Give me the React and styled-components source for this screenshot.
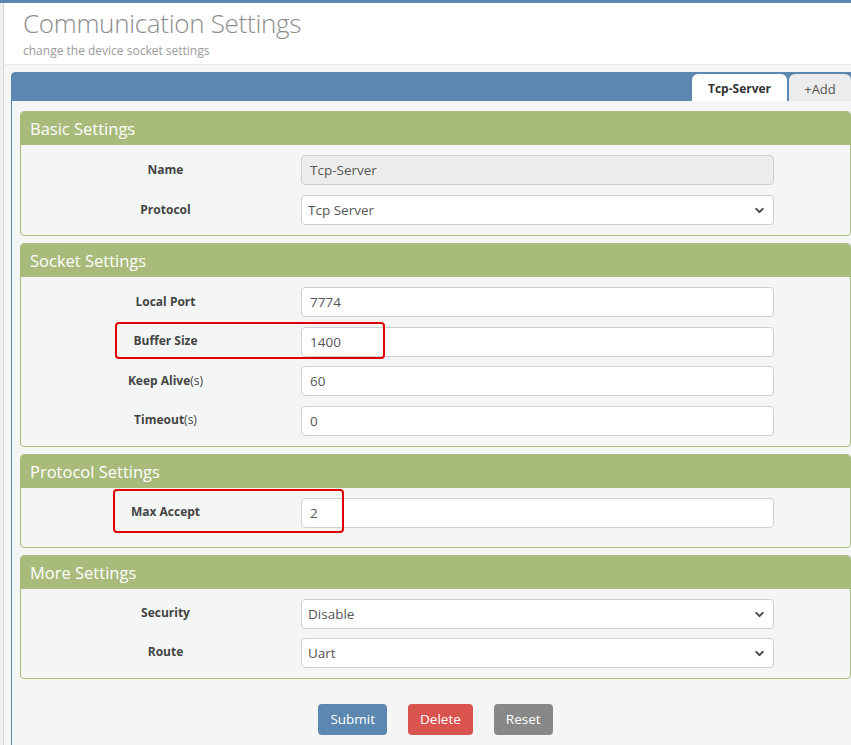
import React from "react"
import styled, { createGlobalStyle } from "styled-components"
import { ChevronDown } from "lucide-react"

const GlobalStyle = createGlobalStyle`
  html, body {
    margin: 0;
    padding: 0;
    background: #f4f6f5;
    font-family: "Open Sans", "Liberation Sans", sans-serif;
    overflow: hidden;
  }
`

const Page = styled.div`
  display: flex;
  min-height: 745px;
  border-top: 3px solid #5b87b0;
  box-sizing: border-box;
  overflow: hidden;
`
const Rail = styled.div`
  width: 3px;
  flex: none;
  background: #f0f0f0;
  border-right: 1px solid #d6d6d6;
`
const Main = styled.div`
  flex: 1;
  min-width: 0;
`
const Header = styled.div`
  background: #fff;
  height: 62px;
  box-sizing: border-box;
  padding: 2px 0 0 19px;
  border-bottom: 1px solid #e8e8e8;
`
const Title = styled.h1`
  margin: 0;
  font-size: 26px;
  font-weight: 300;
  color: #8d8d8d;
  line-height: 36px;
  letter-spacing: -0.3px;
`
const Subtitle = styled.div`
  font-size: 12px;
  color: #9a9a9a;
  margin-top: 1px;
`
const Panel = styled.div`
  margin: 7px -9px 0 7px;
  border: 1px solid #5b87b0;
  border-radius: 4px 4px 0 0;
  min-height: 700px;
`
const TabBar = styled.div`
  background: #5b87b0;
  height: 28px;
  display: flex;
  justify-content: flex-end;
  align-items: flex-end;
  gap: 2px;
  padding-right: 8px;
`
const Tab = styled.div`
  height: 27px;
  box-sizing: border-box;
  display: flex;
  align-items: center;
  justify-content: center;
  width: ${(p) => p.$width}px;
  border-radius: 6px 6px 0 0;
  background: ${(p) => (p.$active ? "#fff" : "#ececec")};
  color: ${(p) => (p.$active ? "#333" : "#555")};
  font-size: ${(p) => (p.$active ? 12 : 13)}px;
  font-weight: ${(p) => (p.$active ? 700 : 400)};
  padding-top: 2px;
`
const Body = styled.div`
  padding: 10px 8px 0 8px;
  display: flex;
  flex-direction: column;
  gap: 7px;
`
const Section = styled.div`
  border: 1px solid #a8bb7b;
  border-radius: 4px;
  background: #f4f6f5;
  overflow: hidden;
`
const SectionHead = styled.div`
  background: #a8bb7b;
  color: #fff;
  font-size: 16.5px;
  height: 33px;
  line-height: 33px;
  padding-left: 9px;
`
const SectionBody = styled.div`
  padding: 10px 0 ${(p) => p.$bottom || 10}px 9px;
  display: flex;
  flex-direction: column;
  gap: ${(p) => p.$gap || 10}px;
`
const Row = styled.div`
  position: relative;
  display: grid;
  grid-template-columns: 271px 473px;
  align-items: center;
`
const Label = styled.label`
  text-align: center;
  font-size: 12px;
  font-weight: 700;
  color: #444;
  padding-bottom: 2px;
  span {
    font-weight: 400;
  }
`
const fieldCss = `
  height: 30px;
  box-sizing: border-box;
  width: 100%;
  border: 1px solid #cfcfcf;
  border-radius: 4px;
  padding: 0 8px;
  font-family: inherit;
  font-size: 13.5px;
  color: #555;
  outline: none;
`
const Input = styled.input`
  ${fieldCss}
  background: ${(p) => (p.disabled ? "#ededed" : "#fff")};
`
const SelectWrap = styled.div`
  position: relative;
  svg {
    position: absolute;
    right: 8px;
    top: 9px;
    color: #444;
    pointer-events: none;
  }
`
const Select = styled.select`
  ${fieldCss}
  appearance: none;
  background: #fff;
  padding-left: 6px;
`
const Highlight = styled.div`
  position: absolute;
  left: ${(p) => p.$left}px;
  top: ${(p) => p.$top}px;
  width: ${(p) => p.$width}px;
  height: ${(p) => p.$height}px;
  border: 2px solid #e00000;
  border-radius: 4px;
  box-sizing: border-box;
  pointer-events: none;
`
const Actions = styled.div`
  display: flex;
  justify-content: center;
  gap: 21px;
  margin-top: 25px;
`
const Button = styled.button`
  height: 31px;
  border: none;
  border-radius: 4px;
  padding: 0 12px;
  font-family: inherit;
  font-size: 13.5px;
  color: #fff;
  background: ${(p) => p.$color};
`

function Field({ label, unit, value, disabled, select, highlight }) {
  return (
    <Row>
      <Label>
        {label}
        {unit && <span>({unit})</span>}
      </Label>
      {select ? (
        <SelectWrap>
          <Select defaultValue={value}>
            <option>{value}</option>
          </Select>
          <ChevronDown size={13} strokeWidth={3.5} />
        </SelectWrap>
      ) : (
        <Input defaultValue={value} disabled={disabled} />
      )}
      {highlight && <Highlight {...highlight} />}
    </Row>
  )
}

export default function App() {
  return (
    <>
      <GlobalStyle />
      <Page>
        <Rail />
        <Main>
          <Header>
            <Title>Communication Settings</Title>
            <Subtitle>change the device socket settings</Subtitle>
          </Header>
          <Panel>
            <TabBar>
              <Tab $active $width={95}>Tcp-Server</Tab>
              <Tab $width={62}>+Add</Tab>
            </TabBar>
            <Body>
              <Section>
                <SectionHead>Basic Settings</SectionHead>
                <SectionBody>
                  <Field label="Name" value="Tcp-Server" disabled />
                  <Field label="Protocol" value="Tcp Server" select />
                </SectionBody>
              </Section>
              <Section>
                <SectionHead>Socket Settings</SectionHead>
                <SectionBody $gap={9.5}>
                  <Field label="Local Port" value="7774" />
                  <Field
                    label="Buffer Size"
                    value="1400"
                    highlight={{ $left: 85, $top: -5, $width: 270, $height: 37 }}
                  />
                  <Field label="Keep Alive" unit="s" value="60" />
                  <Field label="Timeout" unit="s" value="0" />
                </SectionBody>
              </Section>
              <Section>
                <SectionHead>Protocol Settings</SectionHead>
                <SectionBody $bottom={19}>
                  <Field
                    label="Max Accept"
                    value="2"
                    highlight={{ $left: 83, $top: -9, $width: 231, $height: 44 }}
                  />
                </SectionBody>
              </Section>
              <Section>
                <SectionHead>More Settings</SectionHead>
                <SectionBody $gap={9}>
                  <Field label="Security" value="Disable" select />
                  <Field label="Route" value="Uart" select />
                </SectionBody>
              </Section>
            </Body>
            <Actions>
              <Button $color="#5b87b0">Submit</Button>
              <Button $color="#d9534f">Delete</Button>
              <Button $color="#888">Reset</Button>
            </Actions>
          </Panel>
        </Main>
      </Page>
    </>
  )
}
